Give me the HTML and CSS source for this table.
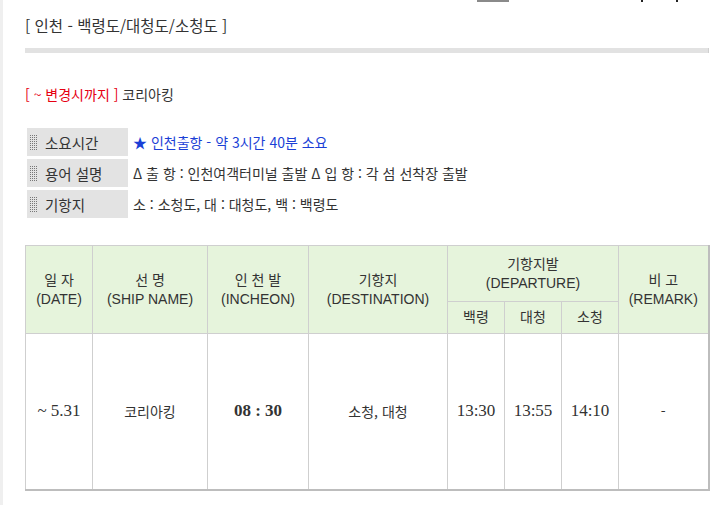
FILE: index.html
```html
<!DOCTYPE html>
<html lang="ko">
<head>
<meta charset="utf-8">
<title>인천 - 백령도/대청도/소청도</title>
<link rel="stylesheet" href="styles.css">
</head>
<body>
<div class="page">
  <div class="topcut"><span class="cut-box"></span><span class="cut-dot d1"></span><span class="cut-dot d2"></span></div>
  <h2 class="title">[ 인천 - 백령도/대청도/소청도 ]</h2>
  <div class="divider"></div>
  <p class="notice"><span class="red">[ ~ 변경시까지 ]</span> 코리아킹</p>
  <div class="info">
    <div class="info-row">
      <div class="label"><span class="dots"></span>소요시간</div>
      <div class="value blue">★ 인천출항 - 약 3시간 40분 소요</div>
    </div>
    <div class="info-row">
      <div class="label"><span class="dots"></span>용어 설명</div>
      <div class="value">Δ 출 항 : 인천여객터미널 출발 Δ 입 항 : 각 섬 선착장 출발</div>
    </div>
    <div class="info-row">
      <div class="label"><span class="dots"></span>기항지</div>
      <div class="value">소 : 소청도, 대 : 대청도, 백 : 백령도</div>
    </div>
  </div>
  <table class="sched">
    <colgroup>
      <col class="c-date"><col class="c-ship"><col class="c-inc"><col class="c-dest">
      <col class="c-sub"><col class="c-sub"><col class="c-sub"><col class="c-rem">
    </colgroup>
    <thead>
      <tr class="h1">
        <th rowspan="2">일 자<br>(DATE)</th>
        <th rowspan="2">선 명<br>(SHIP NAME)</th>
        <th rowspan="2">인 천 발<br>(INCHEON)</th>
        <th rowspan="2">기항지<br>(DESTINATION)</th>
        <th colspan="3">기항지발<br>(DEPARTURE)</th>
        <th rowspan="2">비 고<br>(REMARK)</th>
      </tr>
      <tr class="h2">
        <th>백령</th><th>대청</th><th>소청</th>
      </tr>
    </thead>
    <tbody>
      <tr class="body-row">
        <td class="num">~ 5.31</td>
        <td>코리아킹</td>
        <td class="num bold">08 : 30</td>
        <td>소청, 대청</td>
        <td class="num">13:30</td>
        <td class="num">13:55</td>
        <td class="num">14:10</td>
        <td>-</td>
      </tr>
    </tbody>
  </table>
</div>
</body>
</html>
```

FILE: styles.css
```css
html, body {
  margin: 0;
  padding: 0;
  background: #fff;
}
body {
  font-family: "Liberation Sans", "Noto Sans CJK KR", sans-serif;
  color: #333;
}
.page {
  border-left: 3px solid #efefef;
  min-height: 505px;
  padding-left: 22px;
  width: 690px;
}
.topcut {
  display: flex;
  height: 2px;
}
.cut-box {
  margin-left: 452px;
  width: 32px;
  height: 2px;
  background: #8a8a8a;
}
.cut-dot {
  width: 2px;
  height: 2px;
  background: #222;
}
.d1 { margin-left: 132px; }
.d2 { margin-left: 33px; }
.title {
  margin: 12px 0 0;
  font-size: 15.5px;
  font-weight: normal;
  line-height: 22px;
  color: #333;
  font-family: "Noto Sans CJK KR", sans-serif;
}
.divider {
  margin-top: 12px;
  height: 5px;
  width: 683px;
  background: #e2e2e2;
  border-right: 1px solid #d0d0d0;
}
.notice {
  margin: 31px 0 0;
  line-height: 20px;
  font-size: 14px;
  font-family: "Noto Sans CJK KR", sans-serif;
}
.red { color: #e60012; }
.info {
  margin-top: 24px;
  display: flex;
  flex-direction: column;
  gap: 3px;
}
.info-row {
  display: flex;
  height: 28px;
  align-items: stretch;
}
.label {
  margin-left: 2px;
  width: 101px;
  background: #e3e3e3;
  display: flex;
  align-items: center;
  gap: 7px;
  padding-left: 3px;
  box-sizing: border-box;
  font-family: "Noto Sans CJK KR", sans-serif;
  font-size: 14.5px;
  color: #333;
}
.dots {
  width: 8px;
  height: 16px;
  flex: none;
  background-color: #777;
  background-image:
    repeating-linear-gradient(90deg, transparent 0 1px, #e3e3e3 1px 2px),
    repeating-linear-gradient(0deg, transparent 0 1px, #e3e3e3 1px 2px);
}
.value {
  padding-left: 5px;
  display: flex;
  align-items: center;
  font-family: "Noto Sans CJK KR", sans-serif;
  font-size: 14px;
  color: #333;
  white-space: nowrap;
}
.blue { color: #1b3fd6; }
.sched {
  margin-top: 27px;
  width: 683px;
  border-collapse: collapse;
  table-layout: fixed;
  border-right: 2px solid #bdbdbd;
  border-bottom: 2px solid #bdbdbd;
}
.c-date { width: 67px; }
.c-ship { width: 115px; }
.c-inc { width: 101px; }
.c-dest { width: 139px; }
.c-sub { width: 57px; }
.c-rem { width: 90px; }
.sched th, .sched td {
  border: 1px solid #cfcfcf;
  text-align: center;
  padding: 0;
  font-weight: normal;
  color: #333;
}
.sched th {
  background: #e6f4dc;
  font-size: 14px;
  line-height: 19px;
  font-family: "Liberation Sans", "Noto Sans CJK KR", sans-serif;
}
.h1 { height: 56px; }
.h2 { height: 32px; }
.body-row { height: 156px; }
.sched td {
  font-size: 14px;
  font-family: "Noto Sans CJK KR", sans-serif;
}
.sched td.num {
  font-family: "Liberation Serif", serif;
  font-size: 17px;
}
.sched td.bold { font-weight: bold; }
```
